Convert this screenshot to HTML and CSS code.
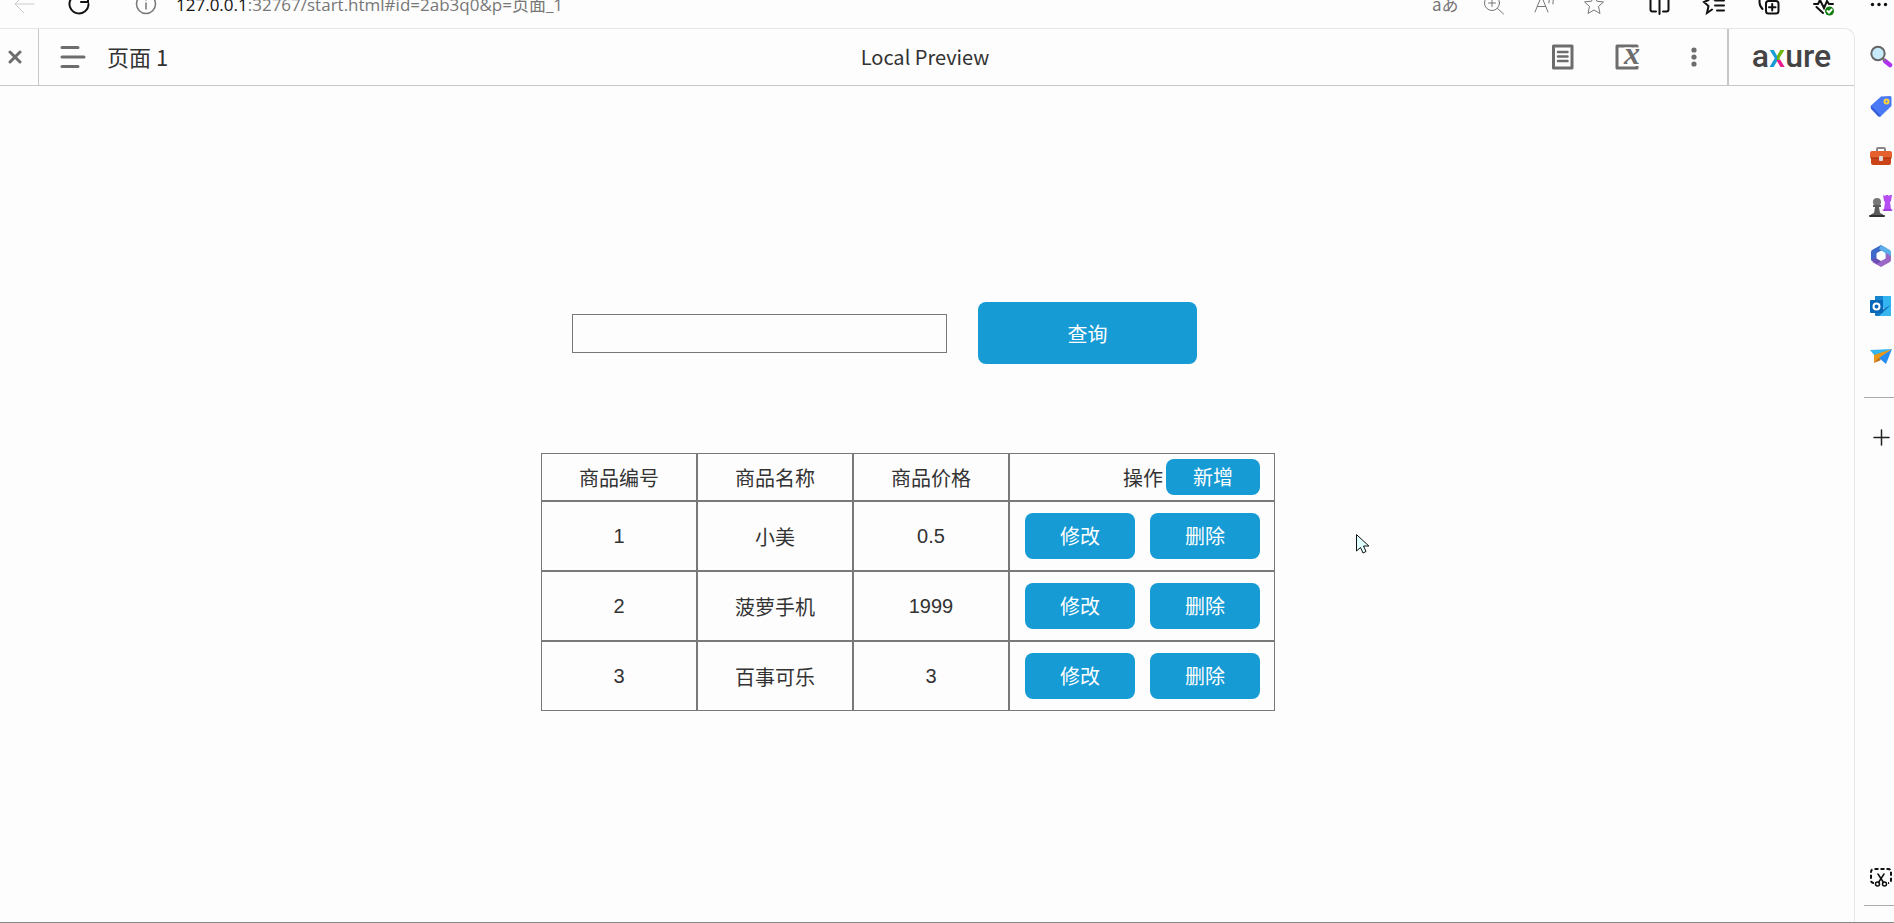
FILE: index.html
```html
<!DOCTYPE html>
<html lang="zh-CN">

<head>
    <meta charset="UTF-8">
    <meta name="viewport" content="width=device-width, initial-scale=1.0">
    <title>页面 1</title>
    <link rel="stylesheet" href="styles.css">
</head>

<body>

    <!-- browser toolbar -->
    <div class="toolbar">
        <div class="nav-icons">
            <button class="icon-btn disabled" aria-label="Back">
                <svg viewBox="0 0 24 24"><path d="M22 12H3M12 3L3 12l9 9" /></svg>
            </button>
            <button class="icon-btn dark" aria-label="Refresh">
                <svg viewBox="0 0 24 24" stroke-width="2"><path d="M21.500 12a9.500 9.500 0 1 1-3-7M21 2v8h-7" /></svg>
            </button>
        </div>
        <button class="icon-btn info-btn" aria-label="Site information">
            <svg viewBox="0 0 24 24" stroke-width="1.500"><circle cx="12" cy="12" r="9.500" /><path d="M12 11v6M12 7v1" /></svg>
        </button>
        <div class="url"><span>127.0.0.1</span>:32767/start.html#id=2ab3q0&amp;p=页面_1</div>
        <div class="page-icons">
            <button class="icon-btn translate" aria-label="Translate">aあ</button>
            <button class="icon-btn" aria-label="Zoom">
                <svg viewBox="0 0 24 24"><circle cx="10" cy="11" r="7.500" /><path d="M15.500 16.500l6 5.500M6.500 11h7M10 7.500v7" /></svg>
            </button>
            <button class="icon-btn" aria-label="Read aloud">
                <svg viewBox="0 0 24 24"><path d="M3 20L9.500 4 16 20M5.500 14.500h8M16 5q2 3 1 6M19.500 3q3 4 1.500 9" /></svg>
            </button>
            <button class="icon-btn" aria-label="Favorite">
                <svg viewBox="0 0 24 24"><path d="M12 3l2.800 6.200 6.700.700-5 4.600 1.500 7L12 18l-6 3.500 1.500-7-5-4.600 6.700-.700z" /></svg>
            </button>
        </div>
        <div class="browser-icons dark">
            <button class="icon-btn" aria-label="Split screen">
                <svg viewBox="0 0 24 24"><path d="M10 4H5.500Q3.500 4 3.500 6v11.500q0 2 2 2H9M15 4h4.500q2 0 2 2v11.500q0 2-2 2H16M12.500 1v21" /></svg>
            </button>
            <button class="icon-btn" aria-label="Favorites">
                <svg viewBox="0 0 24 24"><path d="M14 7.500l-4-.500L8 3 6.500 8 2 10l4.500 4-1.500 7 5-3.500M13 8.500h9M13 13.500h9M15 18.500h7" /></svg>
            </button>
            <button class="icon-btn" aria-label="Collections">
                <svg viewBox="0 0 24 24"><rect x="9" y="9" width="12.500" height="12.500" rx="2.500" /><path d="M15.200 12v6.500M12 15.200h6.500M5.500 17Q2.500 14 2.500 10V4" /></svg>
            </button>
            <button class="icon-btn" aria-label="Browser essentials">
                <svg viewBox="0 0 24 24"><path d="M2 12h4l2-4 4 8 3-7 2 3h4M4.500 15l6.500 6" /><circle cx="17.500" cy="19" r="4.500" fill="#107c10" stroke="none" /><path d="M15.500 19l1.500 1.500 2.700-3" stroke="#fff" /></svg>
            </button>
            <button class="icon-btn" aria-label="More">
                <svg viewBox="0 0 24 24"><g fill="currentColor" stroke="none"><circle cx="5.500" cy="12.500" r="1.700" /><circle cx="12" cy="12.500" r="1.700" /><circle cx="18.500" cy="12.500" r="1.700" /></g></svg>
            </button>
        </div>
    </div>

    <div class="window">
        <div class="frame">
            <header class="header">
                <div class="header-left">
                    <button class="close-btn" aria-label="Close">
                        <svg viewBox="0 0 14 14" width="14" height="14"><path d="M2 2l10 10M12 2L2 12" stroke-width="3" /></svg>
                    </button>
                    <button class="header-btn menu-btn" aria-label="Pages">
                        <svg viewBox="0 0 26 22" width="26" height="22"><path d="M2 1.500h16M2 11h22M2 20.500h16" stroke-width="3" /></svg>
                    </button>
                    <span class="page-name">页面 1</span>
                </div>
                <div class="preview-title">Local Preview</div>
                <div class="header-right">
                    <button class="header-btn" aria-label="Documentation">
                        <svg viewBox="0 0 24 26" width="24" height="26"><path d="M2.500 2h18.500v22H2.500z" stroke-width="3" stroke-linejoin="round" /><path d="M7 8h9.500M7 12.500h9.500M7 17h9.500" stroke-width="2.500" /></svg>
                    </button>
                    <button class="header-btn" aria-label="Variables">
                        <svg viewBox="0 0 26 26" width="26" height="26"><path d="M22 4V2H2v22h20v-2" stroke-width="3" stroke-linecap="butt" stroke-linejoin="round" /><text class="var-x" x="9" y="20">x</text></svg>
                    </button>
                    <button class="header-btn" aria-label="More options">
                        <svg viewBox="0 0 24 26" width="24" height="26"><g fill="#6d6d6d" stroke="none"><circle cx="13" cy="6" r="2.600" /><circle cx="13" cy="13" r="2.600" /><circle cx="13" cy="20" r="2.600" /></g></svg>
                    </button>
                    <a class="logo" href="#">a<span>x</span>ure</a>
                </div>
            </header>

            <main class="canvas">
                <div class="content">
                    <form class="search-form">
                        <input type="text" name="keyword" aria-label="查询">
                        <button class="btn search-btn" type="button">查询</button>
                    </form>

                    <table class="goods">
                        <colgroup>
                            <col class="col-text">
                            <col class="col-text">
                            <col class="col-text">
                            <col>
                        </colgroup>
                        <thead>
                            <tr>
                                <th>商品编号</th>
                                <th>商品名称</th>
                                <th>商品价格</th>
                                <th>
                                    <div class="actions-head">操作<button class="btn add-btn">新增</button></div>
                                </th>
                            </tr>
                        </thead>
                        <tbody>
                            <tr>
                                <td>1</td>
                                <td>小美</td>
                                <td>0.5</td>
                                <td>
                                    <div class="actions"><button class="btn">修改</button><button class="btn">删除</button></div>
                                </td>
                            </tr>
                            <tr>
                                <td>2</td>
                                <td>菠萝手机</td>
                                <td>1999</td>
                                <td>
                                    <div class="actions"><button class="btn">修改</button><button class="btn">删除</button></div>
                                </td>
                            </tr>
                            <tr>
                                <td>3</td>
                                <td>百事可乐</td>
                                <td>3</td>
                                <td>
                                    <div class="actions"><button class="btn">修改</button><button class="btn">删除</button></div>
                                </td>
                            </tr>
                        </tbody>
                    </table>

                    <svg class="cursor" viewBox="0 0 14 20" width="14" height="20"><path d="M.500 1v16l4-3.500 2.500 5.500 3-1.500L7.500 12H12.500z" fill="#e0ffff" stroke="#111" /></svg>
                </div>
            </main>
        </div>

        <!-- browser sidebar -->
        <aside class="sidebar">
            <div class="side-apps">
                <button class="side-btn" aria-label="Search">
                    <svg viewBox="0 0 24 24"><path d="M16 17l5 4" stroke="#b030f0" stroke-width="4.500" /><path d="M14 14.500l2 2" stroke="#777" stroke-width="2" /><circle cx="9" cy="9.500" r="6.700" fill="#c8ebfc" stroke="#666" stroke-width="2" /></svg>
                </button>
                <button class="side-btn" aria-label="Shopping">
                    <svg viewBox="0 0 24 24"><path d="M12 2.500L21 2q1.500 0 1.500 1.500V12L12 22q-1.500 1-3 0l-7-7.500q-1-1.500 0-3z" fill="#4a79f5" /><path d="M2 12l10 10q-1.500 1-3 0l-7-7.500z" fill="#3159d5" /><circle cx="17.500" cy="7.500" r="2" fill="#4a79f5" stroke="#ffd43b" stroke-width="2" /></svg>
                </button>
                <button class="side-btn" aria-label="Tools">
                    <svg viewBox="0 0 24 24"><path d="M8 7V5q0-1 1-1h6q1 0 1 1v2" stroke="#888" stroke-width="2" /><rect x="2" y="8" width="20" height="13" rx="2" fill="#cb4419" /><path d="M1 9q0-2 2-2h18q2 0 2 2v4q0 1-1 1H2q-1 0-1-1z" fill="#e4602c" /><path d="M2 14h20" stroke="#a12f0b" /><rect x="10" y="12" width="4" height="5" rx="1" fill="#ddd" /></svg>
                </button>
                <button class="side-btn" aria-label="Games">
                    <svg viewBox="0 0 24 24"><path d="M14 1l2 1 1-1h2l1 1 1-1 2 0-1 6-1 1 1 7 1 2H14l1-2 1-7-1-1z" fill="#b44df2" /><path d="M14 16h9" stroke="#9130cc" /><circle cx="8" cy="8" r="4" fill="#777" /><path d="M4 11h8v2h-2l1 6q4 1 4 4H1q0-3 4-4l1-6H4z" fill="#5b5b5b" /><path d="M1 22h14" stroke="#333" stroke-width="2" /></svg>
                </button>
                <button class="side-btn" aria-label="Microsoft 365">
                    <svg viewBox="0 0 24 24"><path d="M12 1L3 6q-1 1-1 2v8l6 4V9l9-5z" fill="#3e69c8" /><path d="M12 1l9 5q1 1 1 2v8l-6-3V9l-6-4z" fill="#5caee8" /><path d="M22 12v4q0 1-1 2l-9 5-9-5 5-3 4 1 5-3V9z" fill="#9b67c7" /><path d="M2 16l6-3 4 4-4 3z" fill="#6650b1" /><path d="M12 7l4.500 2.500v5L12 17l-4.500-2.500v-5z" fill="#fff" /></svg>
                </button>
                <button class="side-btn" aria-label="Outlook">
                    <svg viewBox="0 0 24 24"><rect x="6" y="2" width="16" height="12" fill="#32b5f1" /><path d="M6 2h8v6H6z" fill="#1685cd" /><path d="M6 12l8 3 8-4v11H7q-1 0-1-1z" fill="#1377c2" /><path d="M22 11v11H10z" fill="#38b8ef" /><rect x="1" y="6" width="13" height="13" rx="1" fill="#0867b8" /><circle cx="7.500" cy="12.500" r="3" stroke="#fff" stroke-width="2" /></svg>
                </button>
                <button class="side-btn" aria-label="Drop">
                    <svg viewBox="0 0 24 24"><path d="M1 6l22-1L6 12z" fill="#35b4ed" /><path d="M23 5L5 11v8l5-4z" fill="#e99718" /><path d="M23 5L10 14l7 6z" fill="#278cf2" /><path d="M10 14l-5 5 7-3z" fill="#bd6c13" /></svg>
                </button>
            </div>
            <button class="side-btn side-add" aria-label="Add">
                <svg viewBox="0 0 24 24"><path d="M12.500 5v15M5 12.500h15" stroke="#222" stroke-width="1.500" /></svg>
            </button>
            <button class="side-btn side-shot" aria-label="Screenshot">
                <svg viewBox="0 0 24 24" stroke="#111" stroke-width="2"><path d="M5 17q-3 0-3-3V6q0-3 3-3h14q3 0 3 3v8q0 3-3 3" stroke-dasharray="4 2" stroke-linecap="butt" /><path d="M9 8l5.500 8.500M15 8L9.500 16.500" stroke-width="1.500" /><circle cx="8.500" cy="18" r="2" stroke-width="1.500" /><circle cx="15.500" cy="18" r="2" stroke-width="1.500" /></svg>
            </button>
        </aside>
    </div>

</body>

</html>
```
FILE: styles.css
```css
* {
    box-sizing: border-box;
}

body {
    margin: 0;
    min-height: 100vh;
    display: flex;
    flex-direction: column;
    overflow: hidden;
    background-color: #fdfdfd;
    border-bottom: 1px solid #888;
    color: #333;
    font-family: "Noto Sans CJK SC", sans-serif;
}

button {
    border: none;
    padding: 0;
    background: none;
    color: inherit;
    font-family: inherit;
    cursor: pointer;
}

svg {
    display: block;
    fill: none;
    stroke-linecap: round;
}

.toolbar {
    display: flex;
    align-items: center;
    height: 48px;
    margin-top: -20px;
    padding: 0 3px 0 12px;
    color: #777;
}

.nav-icons {
    display: flex;
    gap: 31px;
}

.icon-btn {
    width: 24px;
    height: 24px;
}

.icon-btn svg {
    width: 24px;
    height: 24px;
    stroke: currentColor;
}

.disabled {
    color: #ccc;
}

.dark {
    color: #111;
}

.info-btn {
    margin: 0 18px 0 43px;
}

.translate {
    font-size: 17px;
    line-height: 24px;
    white-space: nowrap;
}

.url {
    flex: 1;
    font-family: "Open Sans", "Noto Sans CJK SC", sans-serif;
    font-size: 17px;
    line-height: 24px;
    padding-top: 2px;
}

.url span {
    color: #111;
}

.page-icons {
    display: flex;
    gap: 26px;
    margin-right: 41px;
}

.browser-icons {
    display: flex;
    gap: 31px;
}

.browser-icons svg {
    stroke-width: 2;
}

.window {
    flex: 1;
    display: flex;
}

.frame {
    flex: 1;
    border-top: 1px solid #e6e6e6;
    border-right: 1px solid #e6e6e6;
    border-top-right-radius: 10px;
}

/* preview header */
.header {
    display: grid;
    grid-template-columns: 1fr auto 1fr;
    align-items: center;
    height: 57px;
    border-bottom: 1px solid #c8c8c8;
}

.header svg {
    stroke: #6d6d6d;
}

.header .var-x {
    fill: #6d6d6d;
    stroke: #fdfdfd;
    stroke-width: 3px;
    paint-order: stroke;
    font-family: "Liberation Serif", serif;
    font-size: 32px;
    font-style: italic;
    font-weight: bold;
}

.header-left,
.header-right {
    display: flex;
    align-items: center;
    height: 56px;
}

.header-right {
    justify-content: flex-end;
    gap: 40px;
}

.close-btn {
    display: flex;
    align-items: center;
    justify-content: center;
    width: 39px;
    height: 56px;
    padding-right: 8px;
    border-right: 1px solid #c8c8c8;
}

.menu-btn {
    margin: 0 21px;
}

.page-name {
    padding-bottom: 2px;
    font-size: 22px;
    line-height: 32px;
}

.preview-title {
    padding-right: 4px;
    font-size: 20px;
    line-height: 32px;
}

.logo {
    display: flex;
    justify-content: center;
    width: 127px;
    height: 56px;
    margin-left: -18px;
    border-left: 2px solid #c8c8c8;
    color: #444;
    font-family: Roboto, sans-serif;
    font-size: 32px;
    font-weight: 500;
    line-height: 54px;
    text-decoration: none;
}

.logo span {
    background: conic-gradient(from 0deg at 50% 56%, #6cb510 90deg, #ec1c8f 90deg 180deg, #169bd5 180deg);
    background-clip: text;
    -webkit-background-clip: text;
    color: transparent;
}

/* page content */
.canvas {
    padding: 216px 38px 0 0;
}

.content {
    position: relative;
    width: 734px;
    margin: 0 auto;
    font-size: 20px;
}

.search-form {
    display: flex;
    align-items: center;
    gap: 31px;
    margin-left: 31px;
}

.search-form input {
    width: 375px;
    height: 39px;
    padding: 2px 4px;
    border: 1px solid #797979;
    background: transparent;
    font-size: 20px;
}

.btn {
    width: 110px;
    height: 46px;
    padding-top: 2px;
    border-radius: 8px;
    background-color: #169bd5;
    color: white;
    font-size: 20px;
    line-height: 30px;
}

.search-btn {
    width: 219px;
    height: 62px;
}

.goods {
    width: 100%;
    margin-top: 89px;
    table-layout: fixed;
    border-collapse: separate;
    border-spacing: 0;
    font-family: "Liberation Sans", "Noto Sans CJK SC", sans-serif;
}

.col-text {
    width: 156px;
}

th,
td {
    height: 70px;
    padding: 0;
    border: 1px solid #797979;
    font-weight: normal;
    text-align: center;
}

th {
    height: 48px;
}

.actions,
.actions-head {
    display: flex;
    align-items: center;
    justify-content: flex-end;
    padding-right: 14px;
}

.actions {
    gap: 15px;
}

.actions-head {
    gap: 3px;
}

.add-btn {
    width: 94px;
    height: 36px;
}

.cursor {
    position: absolute;
    left: 815px;
    top: 232px;
}

/* browser sidebar */
.sidebar {
    display: flex;
    flex-direction: column;
    align-items: flex-end;
    width: 39px;
    padding-bottom: 16px;
}

.side-btn svg {
    width: 24px;
    height: 24px;
}

.side-apps {
    display: flex;
    flex-direction: column;
    gap: 26px;
    width: 30px;
    padding: 16px 0 29px 5px;
    border-bottom: 1px solid #aaa;
}

.side-add {
    margin: 27px 1px 0 0;
}

.side-shot {
    width: 30px;
    margin-top: auto;
    padding: 0 0 15px 5px;
    border-bottom: 1px solid #aaa;
}
```
